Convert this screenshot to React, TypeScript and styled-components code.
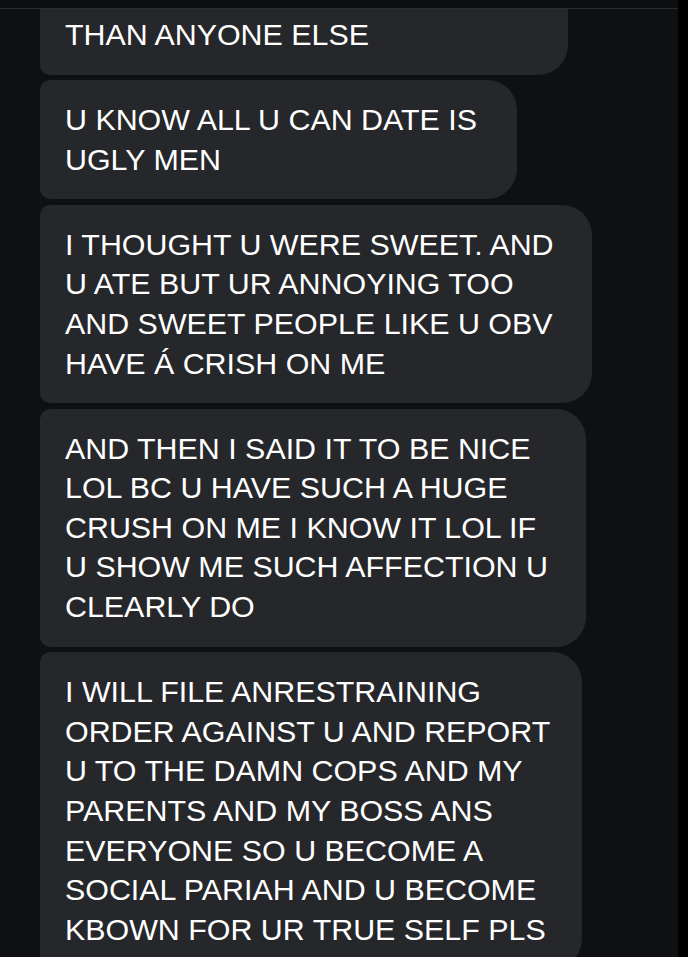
import styled, { createGlobalStyle } from "styled-components";

const GlobalStyle = createGlobalStyle`
  html, body {
    margin: 0;
    padding: 0;
    background: #0e1013;
  }
  #root {
    height: 100vh;
  }
`;

const Screen = styled.div`
  display: flex;
  height: 100vh;
  overflow: hidden;
  background: #0e1013;
`;

const Main = styled.main`
  display: flex;
  flex-direction: column;
  flex: 0 0 678px;
  min-width: 0;
`;

const EdgeStrip = styled.div`
  flex: 1;
  background: #000;
`;

const TopBar = styled.header`
  flex: 0 0 8px;
  background: #0d0f12;
  border-bottom: 1px solid #2a2d32;
`;

const Thread = styled.section`
  flex: 1;
  overflow: hidden;
  padding-left: 40px;
`;

const MessageList = styled.div`
  display: flex;
  flex-direction: column;
  align-items: flex-start;
  gap: 5.5px;
  /* scrolled position of the thread */
  margin-top: -14px;
`;

const Bubble = styled.div<{ $width: number; $cutTop?: boolean }>`
  box-sizing: border-box;
  width: ${({ $width }) => $width}px;
  padding: 20px 0 20px 25px;
  background: #25272b;
  color: #ffffff;
  font-family: "Liberation Sans", Arial, sans-serif;
  font-size: 30.4px;
  line-height: 39.6px;
  border-radius: ${({ $cutTop }) => ($cutTop ? "0 0 30px 10px" : "10px 30px 30px 10px")};
  -webkit-font-smoothing: antialiased;
`;

const Line = styled.span`
  display: block;
  white-space: nowrap;
`;

type Message = { width: number; lines: string[]; cutTop?: boolean };

const messages: Message[] = [
  { width: 528, cutTop: true, lines: ["THAN ANYONE ELSE"] },
  { width: 477, lines: ["U KNOW ALL U CAN DATE IS", "UGLY MEN"] },
  {
    width: 552,
    lines: [
      "I THOUGHT U WERE SWEET. AND",
      "U ATE BUT UR ANNOYING TOO",
      "AND SWEET PEOPLE LIKE U OBV",
      "HAVE Á CRISH ON ME",
    ],
  },
  {
    width: 546,
    lines: [
      "AND THEN I SAID IT TO BE NICE",
      "LOL BC U HAVE SUCH A HUGE",
      "CRUSH ON ME I KNOW IT LOL IF",
      "U SHOW ME SUCH AFFECTION U",
      "CLEARLY DO",
    ],
  },
  {
    width: 542,
    lines: [
      "I WILL FILE ANRESTRAINING",
      "ORDER AGAINST U AND REPORT",
      "U TO THE DAMN COPS AND MY",
      "PARENTS AND MY BOSS ANS",
      "EVERYONE SO U BECOME A",
      "SOCIAL PARIAH AND U BECOME",
      "KBOWN FOR UR TRUE SELF PLS",
    ],
  },
];

export default function App() {
  return (
    <>
      <GlobalStyle />
      <Screen>
        <Main>
          <TopBar />
          <Thread>
            <MessageList>
              {messages.map((m, i) => (
                <Bubble key={i} $width={m.width} $cutTop={m.cutTop}>
                  {m.lines.map((l, j) => (
                    <Line key={j}>{l}</Line>
                  ))}
                </Bubble>
              ))}
            </MessageList>
          </Thread>
        </Main>
        <EdgeStrip />
      </Screen>
    </>
  );
}
